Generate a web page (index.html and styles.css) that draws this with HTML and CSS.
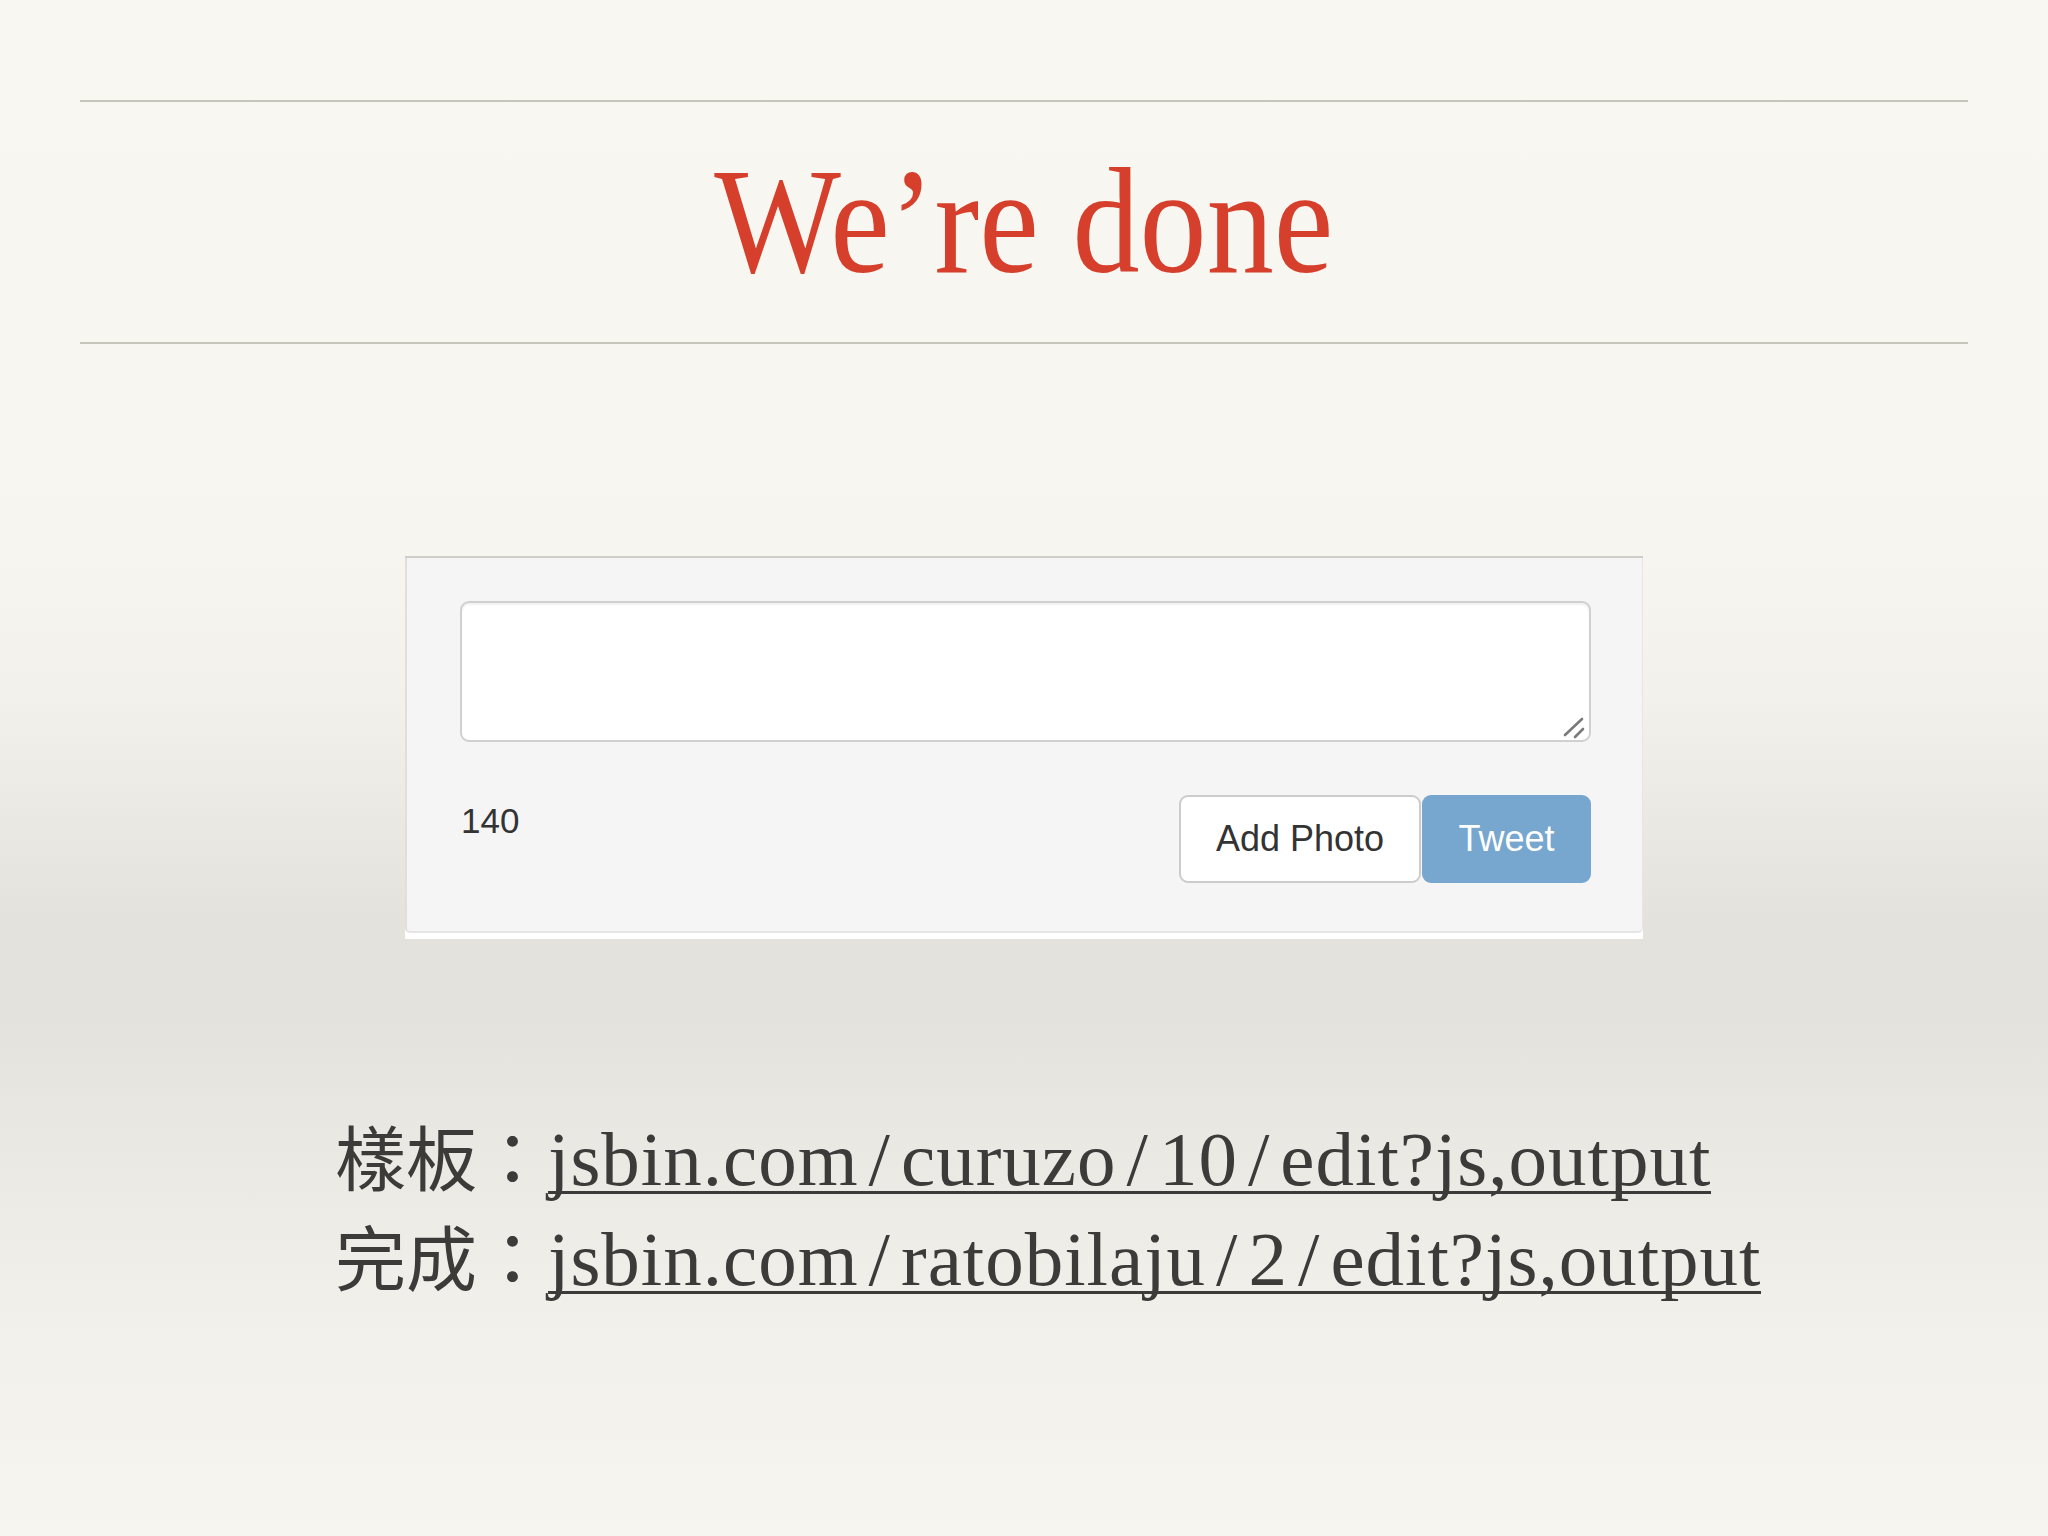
FILE: index.html
```html
<!DOCTYPE html>
<html lang="zh-Hant">
<head>
<meta charset="utf-8">
<title>We’re done</title>
<link rel="stylesheet" href="styles.css">
</head>
<body>
<div class="slide">
  <header class="masthead">
    <h1 class="title">We’re done</h1>
  </header>

  <section class="shot">
    <div class="well">
      <div class="box-wrap">
        <textarea class="tweet-box"></textarea>
        <svg class="grip" width="26" height="26" viewBox="0 0 26 26" aria-hidden="true">
          <line x1="3" y1="21" x2="20" y2="5" stroke="#7a7a7a" stroke-width="2.6" stroke-linecap="round"/>
          <line x1="13" y1="23" x2="21" y2="15" stroke="#7a7a7a" stroke-width="2.6" stroke-linecap="round"/>
        </svg>
      </div>
      <div class="actions">
        <span class="count">140</span>
        <div class="btns">
          <button class="btn btn-default">Add Photo</button>
          <button class="btn btn-primary">Tweet</button>
        </div>
      </div>
    </div>
  </section>

  <section class="links">
    <p class="line"><span class="label">樣板：</span><a class="url">jsbin.com<span class="sl">/</span>curuzo<span class="sl">/</span>10<span class="sl">/</span>edit?js,output</a></p>
    <p class="line"><span class="label">完成：</span><a class="url">jsbin.com<span class="sl">/</span>ratobilaju<span class="sl">/</span>2<span class="sl">/</span>edit?js,output</a></p>
  </section>
</div>
</body>
</html>
```

FILE: styles.css
```css
html, body {
  margin: 0;
  padding: 0;
}

body {
  width: 2048px;
  height: 1536px;
  overflow: hidden;
  background: linear-gradient(to bottom,
    #f8f7f1 0%,
    #f6f5ef 36%,
    #f2f1eb 45%,
    #eae9e4 53%,
    #e3e2dd 60%,
    #e3e2dd 66%,
    #e9e8e3 74%,
    #f1f0eb 86%,
    #f6f5f0 100%);
}

.slide {
  width: 2048px;
  height: 1536px;
  display: flex;
  flex-direction: column;
}

.masthead {
  margin: 100px 80px 0;
  height: 244px;
  box-sizing: border-box;
  border-top: 2px solid #c6c5bb;
  border-bottom: 2px solid #c6c5bb;
  padding-top: 44px;
  text-align: center;
}

.title {
  display: inline-block;
  margin: 0;
  font-family: "Liberation Serif", "Times New Roman", serif;
  font-weight: normal;
  font-size: 150px;
  line-height: 150px;
  color: #d63f2b;
  transform: scaleX(0.895);
}

.shot {
  width: 1238px;
  margin: 212px auto 0;
  box-sizing: border-box;
  background: #ffffff;
  border-top: 2px solid #cfcdc8;
  padding-bottom: 6px;
}

.well {
  background: #f6f5f6;
  border-left: 2px solid #e0dfdd;
  border-right: 1px solid #e6e6e6;
  border-bottom: 2px solid #e5e5e5;
  border-bottom-left-radius: 5px;
  border-bottom-right-radius: 5px;
  padding: 43px 51px 48px 53px;
}

.box-wrap {
  position: relative;
  width: 1131px;
  height: 141px;
}

.tweet-box {
  display: block;
  width: 1131px;
  height: 141px;
  box-sizing: border-box;
  margin: 0;
  border: 2px solid #d0d0d0;
  border-radius: 9px;
  background: #ffffff;
  box-shadow: inset 0 2px 2px rgba(0, 0, 0, 0.06);
  resize: none;
  outline: none;
}

.grip {
  position: absolute;
  right: 3px;
  bottom: 2px;
}

.actions {
  display: flex;
  justify-content: space-between;
  align-items: flex-start;
  margin-top: 53px;
}

.count {
  margin-top: 6px;
  margin-left: 1px;
  font-family: "Liberation Sans", Arial, sans-serif;
  font-size: 35px;
  line-height: 40px;
  color: #333333;
}

.btns {
  display: flex;
  gap: 1px;
}

.btn {
  height: 88px;
  box-sizing: border-box;
  margin: 0;
  padding: 0;
  border-radius: 9px;
  font-family: "Liberation Sans", Arial, sans-serif;
  font-size: 36px;
  line-height: 1;
  text-align: center;
}

.btn-default {
  width: 242px;
  background: #ffffff;
  border: 2px solid #cccccc;
  color: #333333;
}

.btn-primary {
  width: 169px;
  background: #77a6cf;
  border: 2px solid #77a6cf;
  color: #ffffff;
}

.links {
  margin: 165px 0 0 335px;
}

.line {
  margin: 0;
  height: 100px;
  line-height: 100px;
  white-space: nowrap;
  color: #3c3b39;
}

.label {
  font-family: "Noto Sans CJK TC", "Noto Sans CJK SC", sans-serif;
  font-size: 71px;
  line-height: 100px;
  vertical-align: baseline;
}

.url {
  font-family: "Liberation Serif", "Times New Roman", serif;
  font-size: 77px;
  line-height: 100px;
  letter-spacing: 1px;
  color: #3c3b39;
  text-decoration: none;
  background-image: linear-gradient(#3c3b39, #3c3b39);
  background-repeat: no-repeat;
  background-size: 100% 3px;
  background-position: 0 75px;
}

.sl {
  margin: 0 10px;
}
```
